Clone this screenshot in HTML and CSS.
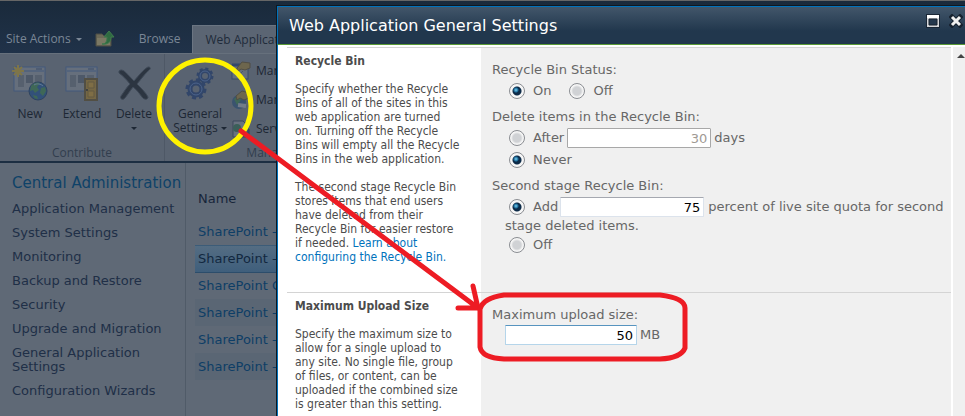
FILE: index.html
```
<!DOCTYPE html>
<html lang="en">
<head>
    <meta charset="UTF-8">
    <meta name="viewport" content="width=device-width, initial-scale=1.0">
    <title>Web Application General Settings</title>
    <link rel="stylesheet" href="styles.css">
</head>
<body>
    <div class="page">
        <header class="topbar">
            <button class="site-actions">Site Actions <span class="caret"></span></button>
            <button class="up-folder" aria-label="Navigate up">
                <svg width="20" height="18" viewBox="0 0 20 18">
                    <path d="M1 4h6l2 2h7v10H1z" fill="#6d6a58" stroke="#4f4f45"/>
                    <path d="M2 8h13v7H2z" fill="#7c7964"/>
                    <path d="M7 14c4 0 5-3 5-7H9l5-6 5 6h-3c0 5-3 8-9 7z" fill="#2f6b41" stroke="#3f7a4d"/>
                </svg>
            </button>
            <a class="tab" href="#">Browse</a>
            <a class="tab active" href="#">Web Applications</a>
        </header>

        <div class="ribbon">
            <section class="group contribute">
                <div class="group-body">
                    <button class="big-button">
                        <svg width="36" height="36" viewBox="0 0 36 36">
                            <rect x="2" y="2" width="31" height="24" fill="#69727f" stroke="#41597f"/>
                            <path d="M3 6h29" stroke="#41597f"/>
                            <path d="M24 4h6" stroke="#35496b"/>
                            <path d="M6 10h6v12H6zM23 10h7v9h-7z" fill="#56606e"/>
                            <path d="M14 10h7v8h-7z" fill="#4b5767"/>
                            <path d="M6 0v12M0 6h12M2 2l8 8M10 2l-8 8" stroke="#857943" stroke-width="2"/>
                            <circle cx="26" cy="26" r="9" fill="#2c4f7b" stroke="#283f5e"/>
                            <path d="M19 21c3-4 7-4 9-3l-3 4 2 3-4 3-2-3-3 1zM29 23l4-1 1 4-3 5-3-3zM21 30l4 1 1 3c-3 0-4-1-5-4z" fill="#3b6a53"/>
                            <path d="M22 20c3-2 7-1 9 1" stroke="#64809c" fill="none"/>
                        </svg>
                        New
                    </button>
                    <button class="big-button">
                        <svg width="36" height="36" viewBox="0 0 36 36">
                            <rect x="2" y="2" width="31" height="24" fill="#69727f" stroke="#41597f"/>
                            <path d="M3 6h29" stroke="#41597f"/>
                            <path d="M24 4h6" stroke="#35496b"/>
                            <path d="M6 10h6v12H6zM23 10h7v9h-7z" fill="#56606e"/>
                            <path d="M14 10h7v8h-7z" fill="#4b5767"/>
                            <path d="M21 14h12v21H21z" fill="#7a683d" stroke="#514c3d" stroke-width="2"/>
                            <path d="M24 17h6v6h-6zM24 26h6v6h-6z" fill="#86713e" stroke="#65583a"/>
                            <circle cx="23" cy="25" r="1" fill="#2c3037"/>
                        </svg>
                        Extend
                    </button>
                    <button class="big-button">
                        <svg width="36" height="36" viewBox="0 0 36 36">
                            <path d="M3 6c4-3 6 1 15 10C24 9 28 4 32 2c3 0 3 2 0 4-4 4-7 8-11 13 5 5 9 9 11 13 0 3-4 3-6 0-3-4-5-7-9-10-4 5-6 9-9 12-3 1-4-1-3-3 3-4 5-8 9-12C10 14 7 11 3 8z" fill="#252d39" stroke="#3b4654"/>
                        </svg>
                        Delete
                        <span class="caret"></span>
                    </button>
                </div>
                <div class="group-name">Contribute</div>
            </section>
            <section class="group manage">
                <div class="group-body">
                    <button class="big-button settings">
                        <svg width="36" height="36" viewBox="0 0 36 36">
                            <g fill="none" stroke="#2c4269">
                                <circle cx="23" cy="11" r="5" stroke-width="4"/>
                                <circle cx="23" cy="11" r="7" stroke-width="3" stroke-dasharray="3 2.5"/>
                                <circle cx="14" cy="24" r="6" stroke-width="5"/>
                                <circle cx="14" cy="24" r="9" stroke-width="3" stroke-dasharray="4 3"/>
                            </g>
                            <g fill="none" stroke="#496391">
                                <circle cx="23" cy="11" r="5"/>
                                <circle cx="14" cy="24" r="6"/>
                            </g>
                        </svg>
                        <span>General<br>Settings <span class="caret"></span></span>
                    </button>
                    <div class="small-buttons">
                        <button class="small-button">
                            <svg width="20" height="20" viewBox="0 0 20 20">
                                <rect x="1" y="4" width="16" height="14" fill="#68727e" stroke="#364a6b"/>
                                <path d="M1 4h16" stroke="#2e446b" stroke-width="3"/>
                                <path d="M4 12l3 3 5-5" stroke="#43586b" fill="none"/>
                                <path d="M6 7l5-6 8 1v5l-5 2-4-1-4 3z" fill="#716747" stroke="#504b3d"/>
                            </svg>
                            Manage Features
                        </button>
                        <button class="small-button">
                            <svg width="20" height="20" viewBox="0 0 20 20">
                                <circle cx="8" cy="12" r="7" fill="#35516f"/>
                                <path d="M3 9l4-3 3 4-4 5z" fill="#3b6a53"/>
                                <path d="M7 15l8 1" stroke="#77818e" stroke-width="4"/>
                                <path d="M5 6l6-5 7 2v5l-5 2-4-2-3 2z" fill="#716747" stroke="#504b3d"/>
                            </svg>
                            Manage Paths
                        </button>
                        <button class="small-button">
                            <svg width="20" height="20" viewBox="0 0 20 20">
                                <path d="M2 2h10l4 4v12H2z" fill="#6b7582" stroke="#39455a"/>
                                <circle cx="6" cy="9" r="4" fill="#365f55"/>
                                <path d="M9 10h9v7H9z" fill="#35506f" stroke="#29405e"/>
                            </svg>
                            Service Connections
                        </button>
                    </div>
                </div>
                <div class="group-name">Manage</div>
            </section>
        </div>

        <div class="workspace">
            <nav class="side-nav">
                <h2><a href="#">Central Administration</a></h2>
                <a href="#">Application Management</a>
                <a href="#">System Settings</a>
                <a href="#">Monitoring</a>
                <a href="#">Backup and Restore</a>
                <a href="#">Security</a>
                <a href="#">Upgrade and Migration</a>
                <a href="#">General Application Settings</a>
                <a href="#">Configuration Wizards</a>
            </nav>
            <main class="content">
                <table class="apps">
                    <thead><tr><th>Name</th></tr></thead>
                    <tbody>
                        <tr><td><a href="#">SharePoint - 80</a></td></tr>
                        <tr class="selected"><td><a href="#">SharePoint - 81</a></td></tr>
                        <tr><td><a href="#">SharePoint Central Administration</a></td></tr>
                        <tr class="alt"><td><a href="#">SharePoint - 82</a></td></tr>
                        <tr><td><a href="#">SharePoint - 83</a></td></tr>
                        <tr class="alt"><td><a href="#">SharePoint - 84</a></td></tr>
                    </tbody>
                </table>
            </main>
        </div>
    </div>

    <div class="dialog" role="dialog" aria-labelledby="dialog-title">
        <div class="dialog-header">
            <h1 id="dialog-title">Web Application General Settings</h1>
            <button aria-label="Maximize">
                <svg width="14" height="14" viewBox="0 0 14 14">
                    <path d="M0 0h14v14H0z" fill="#1a2736"/>
                    <path d="M1 1h12v12H1z" fill="#d5d7da"/>
                    <path d="M1 1h12v3H1z" fill="#fff"/>
                    <path d="M3 5h8v6H3z" fill="#24384d" stroke="#18232f"/>
                </svg>
            </button>
            <button aria-label="Close">
                <svg width="14" height="14" viewBox="0 0 14 14">
                    <path d="M3 3l8 8M11 3l-8 8" stroke="#17222f" stroke-width="5" stroke-linecap="square"/>
                    <path d="M3 3l8 8M11 3l-8 8" stroke="#f0f0f0" stroke-width="3"/>
                </svg>
            </button>
        </div>
        <div class="dialog-body">
            <form class="settings-form">
                <section class="setting recycle">
                    <div class="about">
                        <h3>Recycle Bin</h3>
                        <p>Specify whether the Recycle Bins of all of the sites in this web application are turned<br>on. Turning off the Recycle<br>Bins will empty all the Recycle Bins in the web application.</p>
                        <p>The second stage Recycle Bin stores items that end users have deleted from their Recycle Bin for easier restore<br>if needed. <a href="#">Learn about configuring the Recycle Bin.</a></p>
                    </div>
                    <div class="fields">
                        <div class="field">
                            <div class="caption">Recycle Bin Status:</div>
                            <div class="options row">
                                <label><input type="radio" name="status" checked>On</label>
                                <label><input type="radio" name="status">Off</label>
                            </div>
                        </div>
                        <div class="field">
                            <div class="caption">Delete items in the Recycle Bin:</div>
                            <div class="options">
                                <div class="line">
                                    <label><input type="radio" name="delete">After</label>
                                    <input class="number days" type="text" value="30" aria-label="Days" disabled>
                                    days
                                </div>
                                <label><input type="radio" name="delete" checked>Never</label>
                            </div>
                        </div>
                        <div class="field">
                            <div class="caption">Second stage Recycle Bin:</div>
                            <div class="options stage">
                                <div class="quota">
                                    <label><input type="radio" name="stage" checked>Add</label><input class="number percent" type="text" value="75" aria-label="Percent of live site quota">
                                    percent of live site quota for second stage deleted items.
                                </div>
                                <label><input type="radio" name="stage">Off</label>
                            </div>
                        </div>
                    </div>
                </section>
                <section class="setting upload">
                    <div class="about">
                        <h3>Maximum Upload Size</h3>
                        <p>Specify the maximum size to allow for a single upload to any site. No single file, group of files, or content, can be uploaded if the combined size is greater than this setting.</p>
                    </div>
                    <div class="fields">
                        <div class="field">
                            <label class="caption" for="max-size">Maximum upload size:</label>
                            <div class="line size-line">
                                <input class="number size" id="max-size" type="text" value="50">
                                MB
                            </div>
                        </div>
                    </div>
                </section>
            </form>
            <div class="scrollbar">
                <svg width="8" height="5" viewBox="0 0 8 5"><path d="M0 5l4-4 4 4z" fill="#444"/></svg>
            </div>
        </div>
    </div>

    <!-- hand-drawn marks over the page -->
    <svg class="marks" width="700" height="370" viewBox="0 0 700 370">
        <ellipse cx="205" cy="106" rx="46" ry="46" stroke="#fff200"/>
        <path d="M241 131L478 308M473 286l5 22h-20" stroke="#ed1c24"/>
        <path d="M504 295h156q25 3 25 13v40q-4 10-25 11H504q-22-1-24-12v-38q3-11 24-14z" stroke="#ed1c24"/>
    </svg>
</body>
</html>
```
FILE: styles.css
```
*{box-sizing:border-box}
body{margin:0;height:100vh;overflow:hidden;position:relative;font-family:"DejaVu Sans",Verdana,sans-serif;font-size:13px;background:#5f6976}
button{background:none;border:none;padding:0;margin:0;font:inherit;color:inherit;cursor:pointer}
a{text-decoration:none;color:inherit}
svg{display:block;flex:none}
.caret{display:inline-block;border:3px solid transparent;border-top-color:currentColor;border-bottom:0;vertical-align:middle}

/* dimmed page behind the dialog */
.page{min-height:100vh;display:flex;flex-direction:column;border-top:1px solid #666;font-size:13px;color:#1c2b40}
.topbar{display:flex;align-items:flex-end;height:52px;background:linear-gradient(#1a2a3b,#203249);font-family:"Open Sans","Segoe UI",sans-serif;font-size:12px;color:#7b8796;white-space:nowrap}
.site-actions{padding:0 6px;height:30px}
.site-actions .caret{margin-left:2px}
.up-folder{margin:0 12px 5px 7px}
.tab{height:28px;line-height:28px;padding:0 12px}
.tab.active{background:#5b6573;color:#202b3a;border:1px solid #6b7582;border-bottom:0}
.ribbon{display:flex;height:110px;background:#596371;border-top:1px solid #66707c;border-bottom:2px solid #1c2e42;font-family:"Open Sans","Segoe UI",sans-serif;font-size:12px;line-height:14px;color:#1d2734;white-space:nowrap}
.ribbon svg{opacity:.85}
.group{display:flex;flex-direction:column;justify-content:space-between;padding:11px 4px 0;border-right:1px solid #4e5866}
.group-body{display:flex;height:76px}
.group-name{text-align:center;color:#323e4e;line-height:16px}
.big-button{width:52px;display:flex;flex-direction:column;align-items:center;justify-content:flex-start;gap:6px}
.big-button.settings{width:62px}
.small-buttons{display:flex;flex-direction:column;gap:9px;margin-top:-4px}
.small-button{display:flex;align-items:center;gap:5px;height:20px}
.workspace{display:flex;flex:1}
.side-nav{width:186px;flex:none;padding:10px 4px 0 12px;border-right:1px solid #505b68;color:#202f47;line-height:14px}
.side-nav h2{margin:0 0 4px;font-size:15px;line-height:20px;font-weight:normal;color:#0e4268;white-space:nowrap}
.side-nav>a{display:block;padding:5px 0}
.content{flex:1;padding:9px 0 0 9px}
.apps{width:100%;border-collapse:collapse}
.apps th{height:46px;padding:6px 3px 0;text-align:left;font-weight:normal;color:#17253a}
.apps td{height:27px;padding:0 3px;color:#0e3e66}
.apps .alt{background:#5a6674}
.apps .selected{background:linear-gradient(#556d83,#3f5f7c)}
.apps .selected td{border-top:1px solid #3c5c78;border-bottom:1px solid #2c4d6b;color:#12283f}

/* dialog */
.dialog{position:absolute;left:276px;right:0;top:5px;bottom:0;display:flex;flex-direction:column;background:#fff;border-left:1px solid #101820;border-top:1px solid #101820;overflow:hidden}
.dialog-header{display:flex;align-items:center;gap:9px;height:39px;flex:none;padding:0 2px 0 11px;background:linear-gradient(#42566a,#21374d 65%);border-top:1px solid #0072bc;border-left:1px solid #0072bc;border-bottom:1px solid #5a9a36}
.dialog-header h1{flex:1;margin:0;font-size:16px;font-weight:normal;color:#fff}
.dialog-header button{margin-bottom:10px}
.dialog-body{flex:1;display:flex;border-left:1px solid #0072bc;padding:2px 0 0 9px}
.settings-form{flex:1;display:flex;flex-direction:column}
.setting{display:flex;border-top:1px solid #d4d4d4}
.setting.upload{flex:1}
.recycle{height:245px}
.about{width:194px;flex:none;padding:6px 18px 0 8px;font-family:"DejaVu Sans Condensed",Tahoma,"DejaVu Sans",sans-serif;font-size:12px;line-height:14px;color:#4c4c4c}
.about h3{margin:0 0 14px;font-size:12px;line-height:14px}
.about p{margin:0 0 14px}
.about a{color:#0072bc}
.fields{flex:1;background:#f0f0f0;padding:13px 2px 0 11px;color:#676767}
.field{margin-bottom:6px;line-height:18px}
.caption{display:block;line-height:18px}
.options{padding:1px 0 0 17px}
.options.row{display:flex;gap:18px}
.options label{display:inline-flex;align-items:center;height:22px;gap:8px;vertical-align:middle}
.line{display:flex;align-items:center;gap:3px}
.options.stage{padding:2px 0 0 13px}
.options.stage label{padding-left:4px;height:18px}
.size-line{padding:1px 0 0 13px}
input[type=radio]{appearance:none;width:16px;height:16px;margin:0;border:1px solid #8a8d92;border-radius:50%;background:radial-gradient(circle,#d0d2d5 0 4px,#f6f6f6 6px)}
input[type=radio]:checked{background:radial-gradient(circle at 6px 6px,#7fd0ee 0,#1d6f9e 2px,transparent 3px),radial-gradient(circle,#0d2b48 0 4px,#f6f6f6 5px)}
.number{height:20px;border:1px solid #dce3ec;border-top-color:#a5a8b0;border-radius:1px;padding:0 3px;background:#fff;color:#000;font:inherit;text-align:right;vertical-align:middle}
.days{width:144px;border-color:#a8a8a8;color:#a09a94}
.percent{width:144px;margin-left:2px}
.size{width:132px;border-color:#b5d5ea;border-top-color:#5794bf}
.scrollbar{width:14px;flex:none;display:flex;justify-content:flex-end;padding:6px 0 0;background:#f0f0f0;border-left:2px solid #fff}

.marks{position:absolute;left:0;top:0;pointer-events:none;fill:none;stroke-width:5;stroke-linecap:round;stroke-linejoin:round}
```
